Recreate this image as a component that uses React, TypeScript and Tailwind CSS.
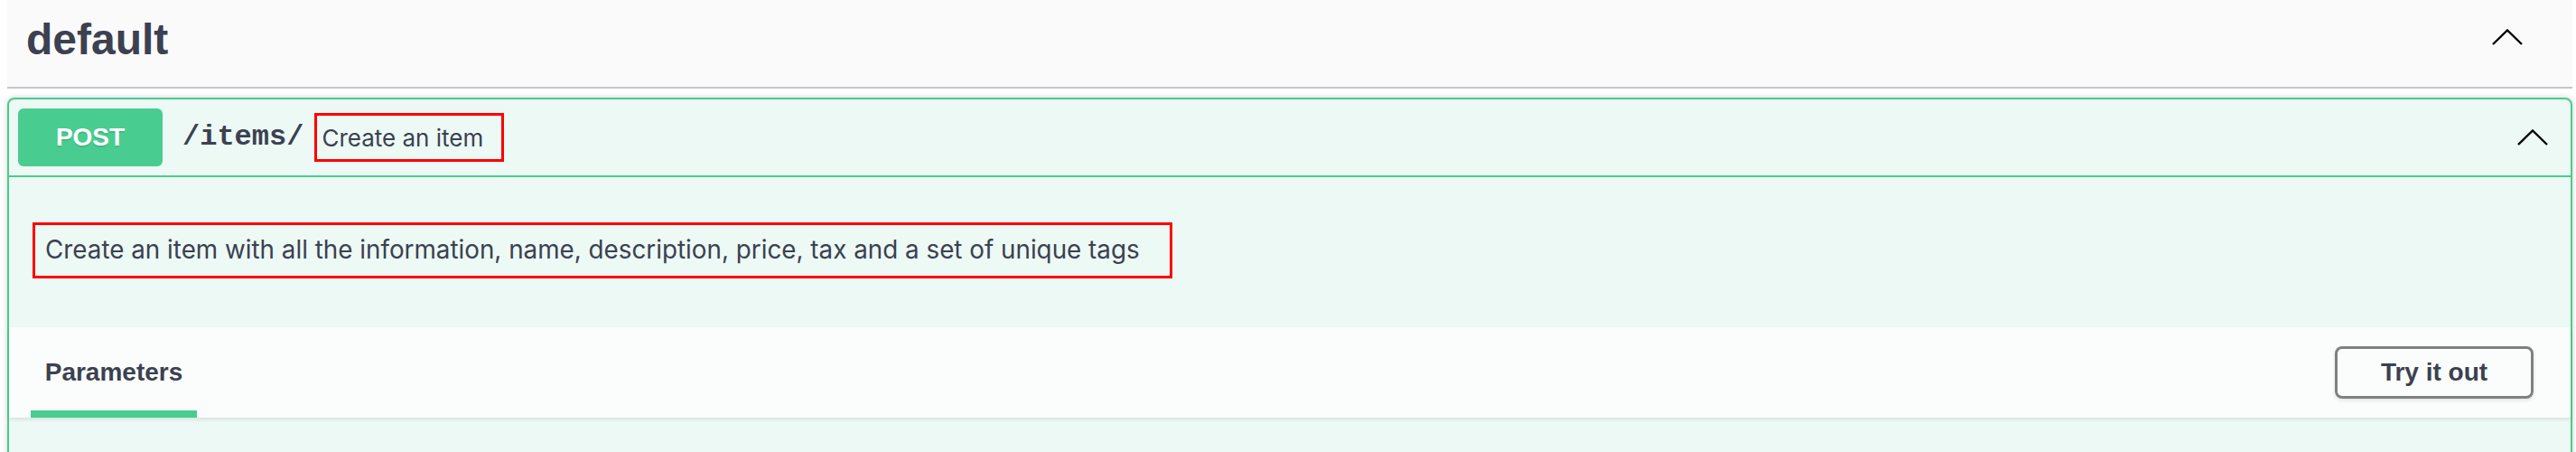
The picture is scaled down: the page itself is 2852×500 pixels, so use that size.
// Swagger-style operation block, drawn at 2x scale
function Caret({ className }: { className?: string }) {
  return (
    <svg className={className} width="34" height="18" viewBox="0 0 34 18" fill="none">
      <polyline points="1,17 17,1.5 33,17" stroke="#000" strokeWidth="2.4" strokeLinejoin="miter" />
    </svg>
  );
}

export default function App() {
  return (
    <div className="w-[2852px] h-[500px] overflow-hidden bg-white pl-[8px] pr-[4px] font-['Liberation_Sans',Arial,sans-serif] text-[#3b4151]">
      {/* tag header */}
      <div className="h-[98px] bg-[#fafafa] border-b-2 border-[#c4c6cb] flex items-start pl-[21px] pr-[55px]">
        <h3 className="mt-[20px] text-[48px] leading-[48px] font-bold">default</h3>
        <Caret className="ml-auto mt-[32px]" />
      </div>

      {/* operation block */}
      <div className="mt-[10px] border-2 border-[#49cc90] rounded-[8px] bg-[#edf9f4] shadow-[0_0_6px_rgba(0,0,0,0.19)] h-[420px]">
        <div className="flex items-center p-[10px] border-b-2 border-[#49cc90]">
          <span className="w-[160px] h-[64px] rounded-[6px] bg-[#49cc90] text-white text-[28px] font-bold flex items-center justify-center [text-shadow:0_2px_0_rgba(0,0,0,0.1)]">
            POST
          </span>
          <span className="pl-[22px] font-['Liberation_Mono',monospace] font-bold text-[32px] leading-none">/items/</span>
          <span className="ml-[12px] w-[210px] h-[54px] border-[3px] border-[#ff0000] flex items-center pl-[5px] font-['Inter',sans-serif] text-[26px]">
            Create an item
          </span>
          <Caret className="ml-auto mr-[15px]" />
        </div>

        <div className="px-[26px] pt-[50px] pb-[54px]">
          <div className="w-[1262px] h-[62px] border-[3px] border-[#ff0000] flex items-center pl-[11px] font-['Inter',sans-serif] text-[27.8px]">
            Create an item with all the information, name, description, price, tax and a set of unique tags
          </div>
        </div>

        <div className="h-[100px] bg-[#fbfdfc] shadow-[0_2px_4px_rgba(0,0,0,0.1)] flex items-stretch">
          <div className="ml-[24px] w-[184px] flex flex-col items-center">
            <h4 className="mt-[36px] text-[28px] leading-[28px] font-bold">Parameters</h4>
            <div className="mt-auto h-[8px] w-full bg-[#49cc90]" />
          </div>
          <div className="ml-auto mr-[41px] flex items-center">
            <button className="w-[220px] h-[58px] border-[3px] border-[#808080] rounded-[8px] text-[28px] font-bold text-[#3b4151] shadow-[0_2px_4px_rgba(0,0,0,0.1)]">
              Try it out
            </button>
          </div>
        </div>
      </div>
    </div>
  );
}
